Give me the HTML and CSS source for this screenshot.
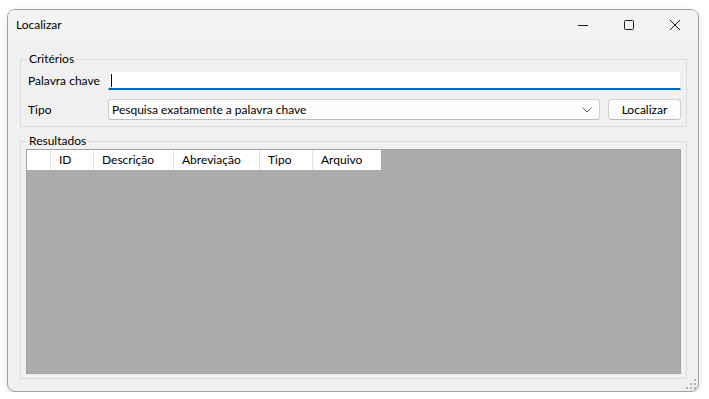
FILE: index.html
```html
<!DOCTYPE html>
<html lang="pt">
<head>
  <meta charset="UTF-8">
  <title>Localizar</title>
  <link rel="stylesheet" href="styles.css">
</head>
<body>

<div class="window">
  <div class="titlebar">
    <span class="title">Localizar</span>
    <div class="caption-buttons">
      <span class="cap-btn">
        <svg width="10" height="10" viewBox="0 0 10 10"><path d="M0 5.5h10" stroke="#1a1a1a" stroke-width="1"/></svg>
      </span>
      <span class="cap-btn">
        <svg width="10" height="10" viewBox="0 0 10 10"><rect x="0.5" y="0.5" width="9" height="9" rx="1" fill="none" stroke="#1a1a1a" stroke-width="1"/></svg>
      </span>
      <span class="cap-btn">
        <svg width="10" height="10" viewBox="0 0 10 10"><path d="M0 0L10 10M10 0L0 10" stroke="#1a1a1a" stroke-width="1"/></svg>
      </span>
    </div>
  </div>

  <div class="client">
    <fieldset class="group">
      <legend>Critérios</legend>
      <div class="criteria-grid">
        <label class="field-label">Palavra chave</label>
        <div class="textbox"><span class="caret"></span></div>

        <label class="field-label">Tipo</label>
        <div class="combo">
          <span>Pesquisa exatamente a palavra chave</span>
          <svg width="10" height="6" viewBox="0 0 10 6"><path d="M0.5 0.5L5 5L9.5 0.5" fill="none" stroke="#606060" stroke-width="1"/></svg>
        </div>
        <button class="btn" type="button">Localizar</button>
      </div>
    </fieldset>

    <fieldset class="group results">
      <legend>Resultados</legend>
      <div class="datagrid">
        <div class="grid-header">
          <div class="col rowhead"></div>
          <div class="col col-id">ID</div>
          <div class="col col-desc">Descrição</div>
          <div class="col col-abrev">Abreviação</div>
          <div class="col col-tipo">Tipo</div>
          <div class="col col-arq">Arquivo</div>
        </div>
      </div>
    </fieldset>

    <span class="grip">
      <svg width="10" height="10" viewBox="0 0 10 10" fill="#b4b4b4">
        <rect x="8" y="0" width="2" height="2"/>
        <rect x="4" y="4" width="2" height="2"/><rect x="8" y="4" width="2" height="2"/>
        <rect x="0" y="8" width="2" height="2"/><rect x="4" y="8" width="2" height="2"/><rect x="8" y="8" width="2" height="2"/>
      </svg>
    </span>
  </div>
</div>

</body>
</html>
```

FILE: styles.css
```css
body {
  margin: 0;
  background: #ffffff;
  font-family: Lato, "Liberation Sans", sans-serif;
  font-size: 12px;
  color: #000;
}

.window {
  margin: 9px 0 0 7px;
  width: 692px;
  height: 383px;
  box-sizing: border-box;
  border: 1px solid #a3a3a3;
  border-radius: 8px;
  overflow: hidden;
  background: #f0f0f0;
  display: flex;
  flex-direction: column;
  box-shadow: 0 2px 6px rgba(0, 0, 0, 0.12);
}

.titlebar {
  height: 30px;
  flex: none;
  display: flex;
  align-items: center;
  background: #f3f3f3;
}

.title {
  padding-left: 8px;
  flex: 1;
  line-height: 16px;
}

.caption-buttons {
  display: flex;
  height: 100%;
}

.cap-btn {
  width: 46px;
  display: flex;
  align-items: center;
  justify-content: center;
}

.cap-btn svg {
  display: block;
}

.client {
  flex: 1;
  position: relative;
  display: flex;
  flex-direction: column;
  padding: 11px 11px 12px 12px;
}

.group {
  margin: 0;
  min-width: 0;
  border: 1px solid #dcdcdc;
  padding: 4px 5px 6px 7px;
}

.group legend {
  padding: 0 2px;
  margin-left: -1px;
  line-height: 16px;
  color: #000;
}

.criteria-grid {
  display: grid;
  grid-template-columns: 72px 1fr auto;
  column-gap: 8px;
  row-gap: 9px;
  align-items: center;
}

.field-label {
  line-height: 16px;
  color: #000;
  white-space: nowrap;
}

.textbox {
  grid-column: 2 / 4;
  height: 19px;
  box-sizing: border-box;
  background: #fff;
  border: 1px solid #ececec;
  border-bottom: 2px solid #0067c0;
  border-radius: 3px 3px 0 0;
  display: flex;
  align-items: center;
  padding-left: 2px;
}

.caret {
  width: 1px;
  height: 13px;
  background: #000;
}

.combo {
  height: 21px;
  box-sizing: border-box;
  background: #fdfdfd;
  border: 1px solid #d0d0d0;
  border-bottom-color: #bcbcbc;
  border-radius: 3px;
  display: flex;
  align-items: center;
  justify-content: space-between;
  padding: 0 7px 0 3px;
}

.btn {
  width: 73px;
  height: 21px;
  box-sizing: border-box;
  background: #fdfdfd;
  border: 1px solid #d0d0d0;
  border-bottom-color: #bcbcbc;
  border-radius: 4px;
  font-family: inherit;
  font-size: 12px;
  color: #000;
  padding: 0;
}

.results {
  margin-top: 6px;
  flex: 1;
  display: flex;
  flex-direction: column;
  padding: 0 5px 4px 5px;
}

.results legend {
  margin-left: 1px;
}

.datagrid {
  flex: 1;
  background: #ababab;
  border: 1px solid #a0a0a0;
}

.grid-header {
  display: flex;
  height: 20px;
  width: 354px;
  background: #fff;
}

.col {
  box-sizing: border-box;
  height: 100%;
  line-height: 20px;
  padding-left: 8px;
  border-right: 1px solid #e3e3e3;
  white-space: nowrap;
}

.rowhead { width: 24px; }
.col-id { width: 43px; }
.col-desc { width: 80px; }
.col-abrev { width: 86px; }
.col-tipo { width: 53px; }
.col-arq { width: 68px; border-right: none; }

.grip {
  position: absolute;
  right: 2px;
  bottom: 2px;
  line-height: 0;
}
```
